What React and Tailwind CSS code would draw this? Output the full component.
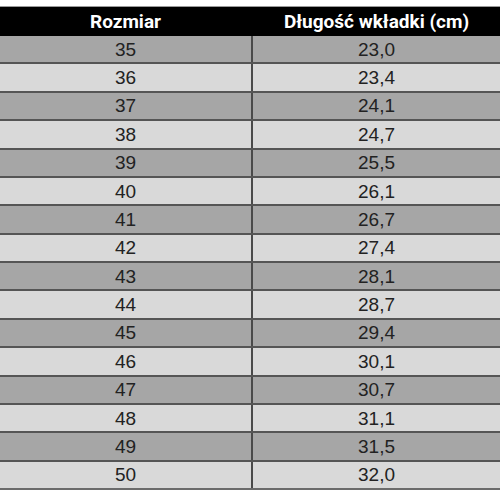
import React from "react";

const rows = [
  ["35", "23,0"], ["36", "23,4"], ["37", "24,1"], ["38", "24,7"],
  ["39", "25,5"], ["40", "26,1"], ["41", "26,7"], ["42", "27,4"],
  ["43", "28,1"], ["44", "28,7"], ["45", "29,4"], ["46", "30,1"],
  ["47", "30,7"], ["48", "31,1"], ["49", "31,5"], ["50", "32,0"],
];

export default function App() {
  return (
    <div className="w-[500px] h-[500px] bg-white pt-[6px]" style={{ fontFamily: '"Liberation Sans", Arial, sans-serif' }}>
      <div className="border-t border-[#9a9a9a]">
        <div className="grid grid-cols-[251px_2px_247px] h-[29px] bg-black text-white font-bold text-[19px] leading-none" style={{ fontFamily: 'Roboto, "Liberation Sans", sans-serif' }}>
          <div className="flex items-center justify-center">Rozmiar</div>
          <div className="bg-black" />
          <div className="flex items-center justify-center">Długość wkładki (cm)</div>
        </div>
        <div className="flex flex-col h-[454px] border-b-2 border-[#6b6b6b]">
          {rows.map(([a, b], i) => (
            <div
              key={a}
              className={`flex-1 min-h-0 grid grid-cols-[251px_2px_247px] text-[19px] leading-none text-[#222] ${i % 2 === 0 ? "bg-[#a6a6a6]" : "bg-[#d9d9d9]"} ${i > 0 ? "border-t-2 border-[#555]" : ""}`}
            >
              <div className="flex items-center justify-center">{a}</div>
              <div className="bg-[#4a4a4a]" />
              <div className="flex items-center justify-center">{b}</div>
            </div>
          ))}
        </div>
      </div>
    </div>
  );
}
